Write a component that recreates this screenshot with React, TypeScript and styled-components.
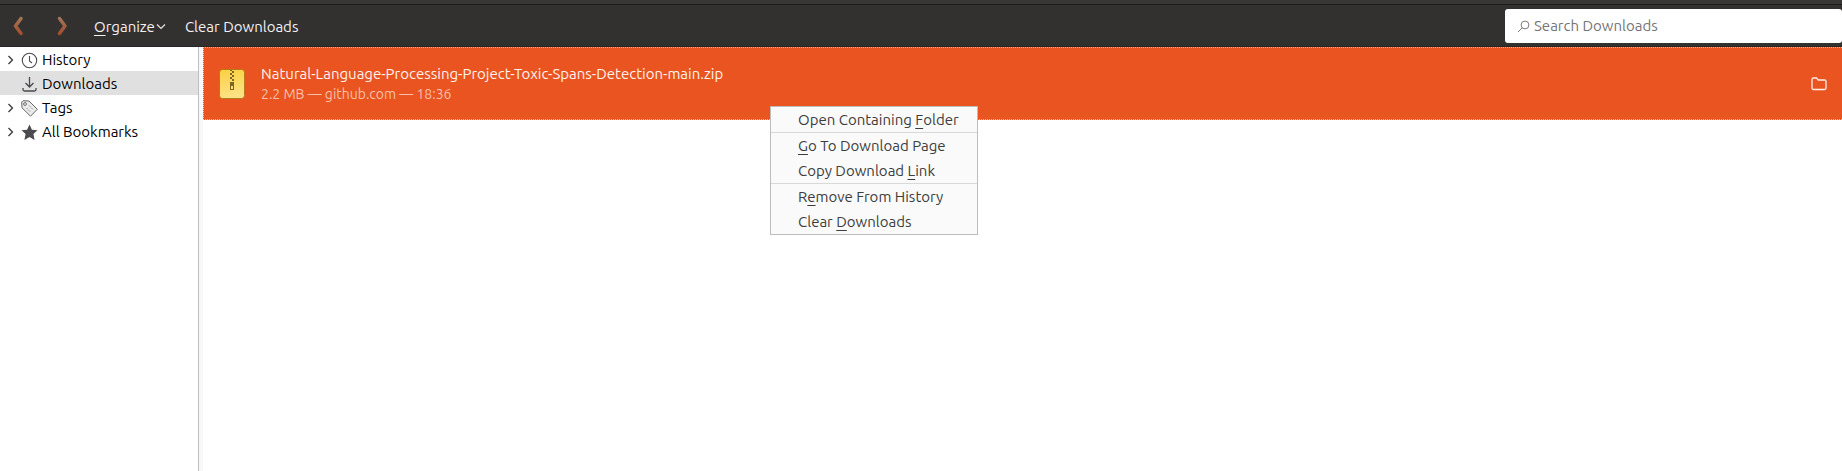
import React from "react";
import styled, { createGlobalStyle, css } from "styled-components";

const GlobalStyle = createGlobalStyle`
  *, *::before, *::after { box-sizing: border-box; }
  html, body, #root { height: 100%; }
  body {
    margin: 0;
    background: #ffffff;
    color: #000000;
    font-family: "Ubuntu", "Noto Sans", sans-serif;
    font-size: 15px;
    line-height: 20px;
  }
  button, input { font: inherit; color: inherit; }
`;

const Window = styled.div`
  display: flex;
  flex-direction: column;
  min-height: 100%;
`;

const Toolbar = styled.header`
  display: flex;
  align-items: center;
  height: 47px;
  padding-top: 5px;
  background: linear-gradient(#393636 4px, #1c1a1a 4px, #1c1a1a 5px, #333030 5px, #333030 46px, #272525 46px);
  color: #f2f1f0;
`;

const PlainButton = styled.button`
  display: flex;
  align-items: center;
  padding: 0;
  border: 0;
  background: none;
  text-align: left;
  white-space: nowrap;
`;

const NavButton = styled(PlainButton)`
  justify-content: center;
  width: 44px;
  height: 36px;

  &:first-child {
    width: 36px;
    margin-right: 4px;
  }
`;

const ToolbarButton = styled(PlainButton)<{ $start: number }>`
  height: 36px;
  margin-left: ${({ $start }) => $start}px;
  padding-top: 2px;
`;

const AccessKey = styled.span`
  text-decoration: underline;
  text-decoration-thickness: 1px;
  text-underline-offset: 3px;
  text-decoration-skip-ink: none;
`;

const SearchBox = styled.label`
  display: flex;
  align-items: center;
  gap: 4px;
  width: 337px;
  height: 34px;
  margin-left: auto;
  padding: 0 12px;
  border-radius: 3px;
  background: #ffffff;
  color: #777777;
`;

const SearchInput = styled.input`
  flex: 1;
  min-width: 0;
  padding: 0;
  border: 0;
  outline: 0;
  background: none;

  &::placeholder { color: #757575; opacity: 1; }
`;

const Body = styled.div`
  display: flex;
  flex: 1;
`;

const Sidebar = styled.nav`
  width: 199px;
  flex: none;
  border-right: 1px solid #bfbfbf;
`;

const Splitter = styled.div`
  width: 4px;
  flex: none;
  background: #f7f7f7;
`;

const TreeRow = styled(PlainButton)<{ $selected?: boolean }>`
  width: 100%;
  height: 24px;
  padding: 2px 0 0 5px;
  ${({ $selected }) => $selected && css`background: #e0e0e0;`}
`;

const Twisty = styled.span`
  display: flex;
  width: 16px;
`;

const TreeIcon = styled.span`
  display: flex;
  width: 21px;
  color: #4a4a4f;
`;

const Content = styled.main`
  flex: 1;
  min-width: 0;
`;

const DownloadItem = styled.article`
  display: flex;
  align-items: center;
  height: 73px;
  padding: 0 15px;
  border: 1px dotted #f9c1a8;
  border-right-width: 0;
  background: #e95420;
  color: #ffffff;
`;

const DownloadText = styled.div`
  flex: 1;
  min-width: 0;
  margin-left: 16px;
`;

const FileName = styled.div`
  color: #fff2ec;
`;

const FileDetails = styled.div`
  color: #f8bfa9;
  font-size: 14px;
`;

const ContextMenu = styled.div`
  position: absolute;
  top: 106px;
  left: 770px;
  width: 208px;
  border: 1px solid #bdbdbd;
  background: #fafafa;
  color: #3d3d3d;
`;

const MenuGroup = styled.div`
  & + & { border-top: 1px solid #d9d9d9; }
`;

const MenuItem = styled(PlainButton)`
  width: 100%;
  height: 25px;
  padding-left: 27px;
`;

const BackIcon = () => (
  <svg width="16" height="24" viewBox="0 0 16 24" fill="none" aria-hidden="true">
    <defs>
      <linearGradient id="nav" x1="0" y1="0" x2="0" y2="24" gradientUnits="userSpaceOnUse">
        <stop offset="0.1" stopColor="#a07a5c" />
        <stop offset="0.9" stopColor="#a34a28" />
      </linearGradient>
    </defs>
    <path d="M11 4.500 5.500 12l5.500 7.500" stroke="url(#nav)" strokeWidth="3.500" strokeLinecap="round" strokeLinejoin="round" />
  </svg>
);

const ForwardIcon = () => (
  <svg width="16" height="24" viewBox="0 0 16 24" fill="none" aria-hidden="true">
    <path d="M5.500 4.500 11 12l-5.500 7.500" stroke="url(#nav)" strokeWidth="3.500" strokeLinecap="round" strokeLinejoin="round" />
  </svg>
);

const ChevronDown = () => (
  <svg width="12" height="12" viewBox="0 0 12 12" fill="none" aria-hidden="true">
    <path d="M2 3.500 6 7.500l4-4" stroke="#e6e4e2" strokeWidth="1.200" />
  </svg>
);

const ChevronRight = () => (
  <svg width="12" height="12" viewBox="0 0 12 12" fill="none" aria-hidden="true">
    <path d="M3.500 2 7.500 6 3.500 10" stroke="#3a3a3a" strokeWidth="1.300" />
  </svg>
);

const SearchIcon = () => (
  <svg width="13" height="13" viewBox="0 0 13 13" fill="none" stroke="#7c7c7c" aria-hidden="true">
    <circle cx="8" cy="5" r="3.900" />
    <path d="M5.200 7.800 1 12" />
  </svg>
);

const HistoryIcon = () => (
  <svg width="17" height="17" viewBox="0 0 17 17" fill="none" stroke="currentColor" strokeWidth="1.100" aria-hidden="true">
    <circle cx="8.500" cy="8.500" r="7.200" />
    <path d="M8.500 4v5l2.500 2" />
  </svg>
);

const DownloadIcon = () => (
  <svg width="17" height="17" viewBox="0 0 17 17" fill="none" stroke="currentColor" strokeWidth="1.300" aria-hidden="true">
    <path d="M8.500 1v10M4.500 7l4 4 4-4M2 12v1.500a1.500 1.500 0 0 0 1.500 1.500h10a1.500 1.500 0 0 0 1.500-1.500V12" />
  </svg>
);

const TagIcon = () => (
  <svg width="17" height="17" viewBox="0 0 17 17" aria-hidden="true">
    <path d="M.700 2 2 .700 8 1 16.300 9.300 9.500 16.200 1 7.800z" fill="#ebebec" stroke="#66666a" strokeLinejoin="round" />
    <circle cx="4" cy="4" r="1.400" fill="#fff" stroke="#5a5a5e" strokeWidth="0.900" />
    <path d="M8 5.500l4.500 4.500M5.500 8l3.500 3.500" stroke="#8a8a8e" strokeWidth="0.900" strokeDasharray="2 1" />
  </svg>
);

const StarIcon = () => (
  <svg width="17" height="17" viewBox="0 0 17 17" aria-hidden="true">
    <path d="M8.500.500l2.400 5.200 5.600.600-4.100 3.800 1.200 5.900-5.100-2.900-5.100 2.900 1.200-5.900L.500 6.300l5.600-.600z" fill="currentColor" />
  </svg>
);

const ZipIcon = () => (
  <svg width="26" height="30" viewBox="0 0 26 30" aria-hidden="true">
    <defs>
      <linearGradient id="zip" x1="0" y1="0" x2="0.200" y2="1">
        <stop offset="0" stopColor="#fbd03f" />
        <stop offset="1" stopColor="#fde285" />
      </linearGradient>
    </defs>
    <rect x="0.500" y="0.500" width="25" height="29" rx="3" fill="url(#zip)" stroke="#b5791a" />
    <path d="M11 1h2v1h-2zM13 2h2v2h-2zM11 4h2v2h-2zM13 6h2v2h-2zM11 8h2v2h-2zM13 10h2v2h-2z" fill="#7c6826" />
    <path d="M11 13h4v8h-4zM12 17v3h2v-3z" fill="#7c6826" fillRule="evenodd" />
  </svg>
);

const FolderIcon = () => (
  <svg width="16" height="16" viewBox="0 0 16 16" fill="none" aria-hidden="true">
    <path d="M1 3.500a1.500 1.500 0 0 1 1.500-1.500h3l1.800 2h6.200a1.500 1.500 0 0 1 1.500 1.500v6.500a1.500 1.500 0 0 1-1.500 1.500h-11a1.500 1.500 0 0 1-1.500-1.500z" stroke="#fdeee8" strokeWidth="1.300" />
  </svg>
);

const places = [
  { label: "History", icon: <HistoryIcon />, expandable: true },
  { label: "Downloads", icon: <DownloadIcon />, expandable: false },
  { label: "Tags", icon: <TagIcon />, expandable: true },
  { label: "All Bookmarks", icon: <StarIcon />, expandable: true },
];

// Each entry is split as [before, access key, after].
const menuGroups = [
  [["Open Containing ", "F", "older"]],
  [["", "G", "o To Download Page"], ["Copy Download ", "L", "ink"]],
  [["R", "e", "move From History"], ["Clear ", "D", "ownloads"]],
];

export default function App() {
  return (
    <Window>
      <GlobalStyle />
      <Toolbar>
        <NavButton type="button" aria-label="Back"><BackIcon /></NavButton>
        <NavButton type="button" aria-label="Forward"><ForwardIcon /></NavButton>
        <ToolbarButton type="button" $start={10}>
          <span><AccessKey>O</AccessKey>rganize</span>
          <ChevronDown />
        </ToolbarButton>
        <ToolbarButton type="button" $start={18}>Clear Downloads</ToolbarButton>
        <SearchBox>
          <SearchIcon />
          <SearchInput type="text" placeholder="Search Downloads" aria-label="Search Downloads" />
        </SearchBox>
      </Toolbar>
      <Body>
        <Sidebar>
          {places.map(({ label, icon, expandable }) => (
            <TreeRow key={label} type="button" $selected={label === "Downloads"}>
              <Twisty>{expandable && <ChevronRight />}</Twisty>
              <TreeIcon>{icon}</TreeIcon>
              {label}
            </TreeRow>
          ))}
        </Sidebar>
        <Splitter />
        <Content>
          <DownloadItem>
            <ZipIcon />
            <DownloadText>
              <FileName>Natural-Language-Processing-Project-Toxic-Spans-Detection-main.zip</FileName>
              <FileDetails>2.2 MB — github.com — 18:36</FileDetails>
            </DownloadText>
            <PlainButton type="button" aria-label="Open Containing Folder"><FolderIcon /></PlainButton>
          </DownloadItem>
        </Content>
      </Body>
      <ContextMenu role="menu">
        {menuGroups.map((group, index) => (
          <MenuGroup key={index}>
            {group.map(([before, key, after]) => (
              <MenuItem key={before + key + after} type="button" role="menuitem">
                <span>{before}<AccessKey>{key}</AccessKey>{after}</span>
              </MenuItem>
            ))}
          </MenuGroup>
        ))}
      </ContextMenu>
    </Window>
  );
}
